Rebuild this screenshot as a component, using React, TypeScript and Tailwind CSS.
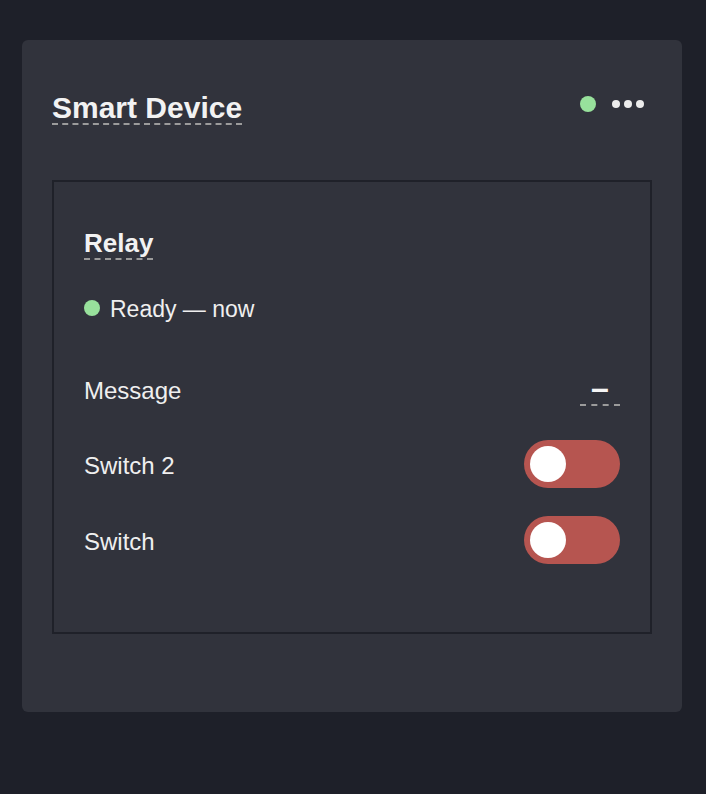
import { type FC } from 'react';

const font = { fontFamily: '"Liberation Sans", Arial, sans-serif' };

const Toggle: FC = () => (
  <button
    type="button"
    className="flex items-center w-24 h-12 rounded-full bg-[#b65550] pl-1.5"
    aria-pressed="false"
  >
    <span className="block w-9 h-9 rounded-full bg-white" />
  </button>
);

const rows = [
  { label: 'Switch 2', mt: 'mt-[25px]' },
  { label: 'Switch', mt: 'mt-[28px]' },
];

const App: FC = () => {
  return (
    <div className="min-h-[794px] bg-[#1e2029] pt-10 pl-[22px]" style={font}>
      <div className="w-[660px] h-[672px] rounded-md bg-[#31333c] px-[30px] pt-[53px]">
        <div className="flex justify-between items-start">
          <h2 className="w-fit text-[30px] leading-none font-bold text-[#f2f2f2] border-b-2 border-dashed border-[#9b9b9b]">
            Smart Device
          </h2>
          <div className="flex items-center gap-4 mt-[3px] mr-2">
            <span className="block w-4 h-4 rounded-full bg-[#98e19c]" />
            <div className="flex gap-1">
              <span className="block w-2 h-2 rounded-full bg-[#ececec]" />
              <span className="block w-2 h-2 rounded-full bg-[#ececec]" />
              <span className="block w-2 h-2 rounded-full bg-[#ececec]" />
            </div>
          </div>
        </div>

        <div className="mt-[55px] h-[454px] border-2 border-[#1f2129] px-[30px] pt-12">
          <h3 className="w-fit text-[26px] leading-none font-bold text-[#f2f2f2] pb-[2px] border-b-2 border-dashed border-[#9b9b9b]">
            Relay
          </h3>

          <div className="mt-9 flex items-center h-6 gap-2.5">
            <span className="block w-4 h-4 rounded-full bg-[#98e19c]" />
            <span className="mt-0.5 text-[23px] leading-6 text-[#efefef]">Ready — now</span>
          </div>

          <div className="mt-[47px] flex items-center justify-between h-12">
            <span className="text-[24px] leading-6 text-[#efefef]">Message</span>
            <span className="block w-10 h-[30px] text-center text-[32px] leading-6 font-bold text-[#f5f5f5] border-b-2 border-dashed border-[#9b9b9b]">
              –
            </span>
          </div>

          {rows.map((r) => (
            <div key={r.label} className={`${r.mt} flex items-center justify-between h-12`}>
              <span className="mt-1 text-[24px] leading-6 text-[#efefef]">{r.label}</span>
              <Toggle />
            </div>
          ))}
        </div>
      </div>
    </div>
  );
};

export default App;
